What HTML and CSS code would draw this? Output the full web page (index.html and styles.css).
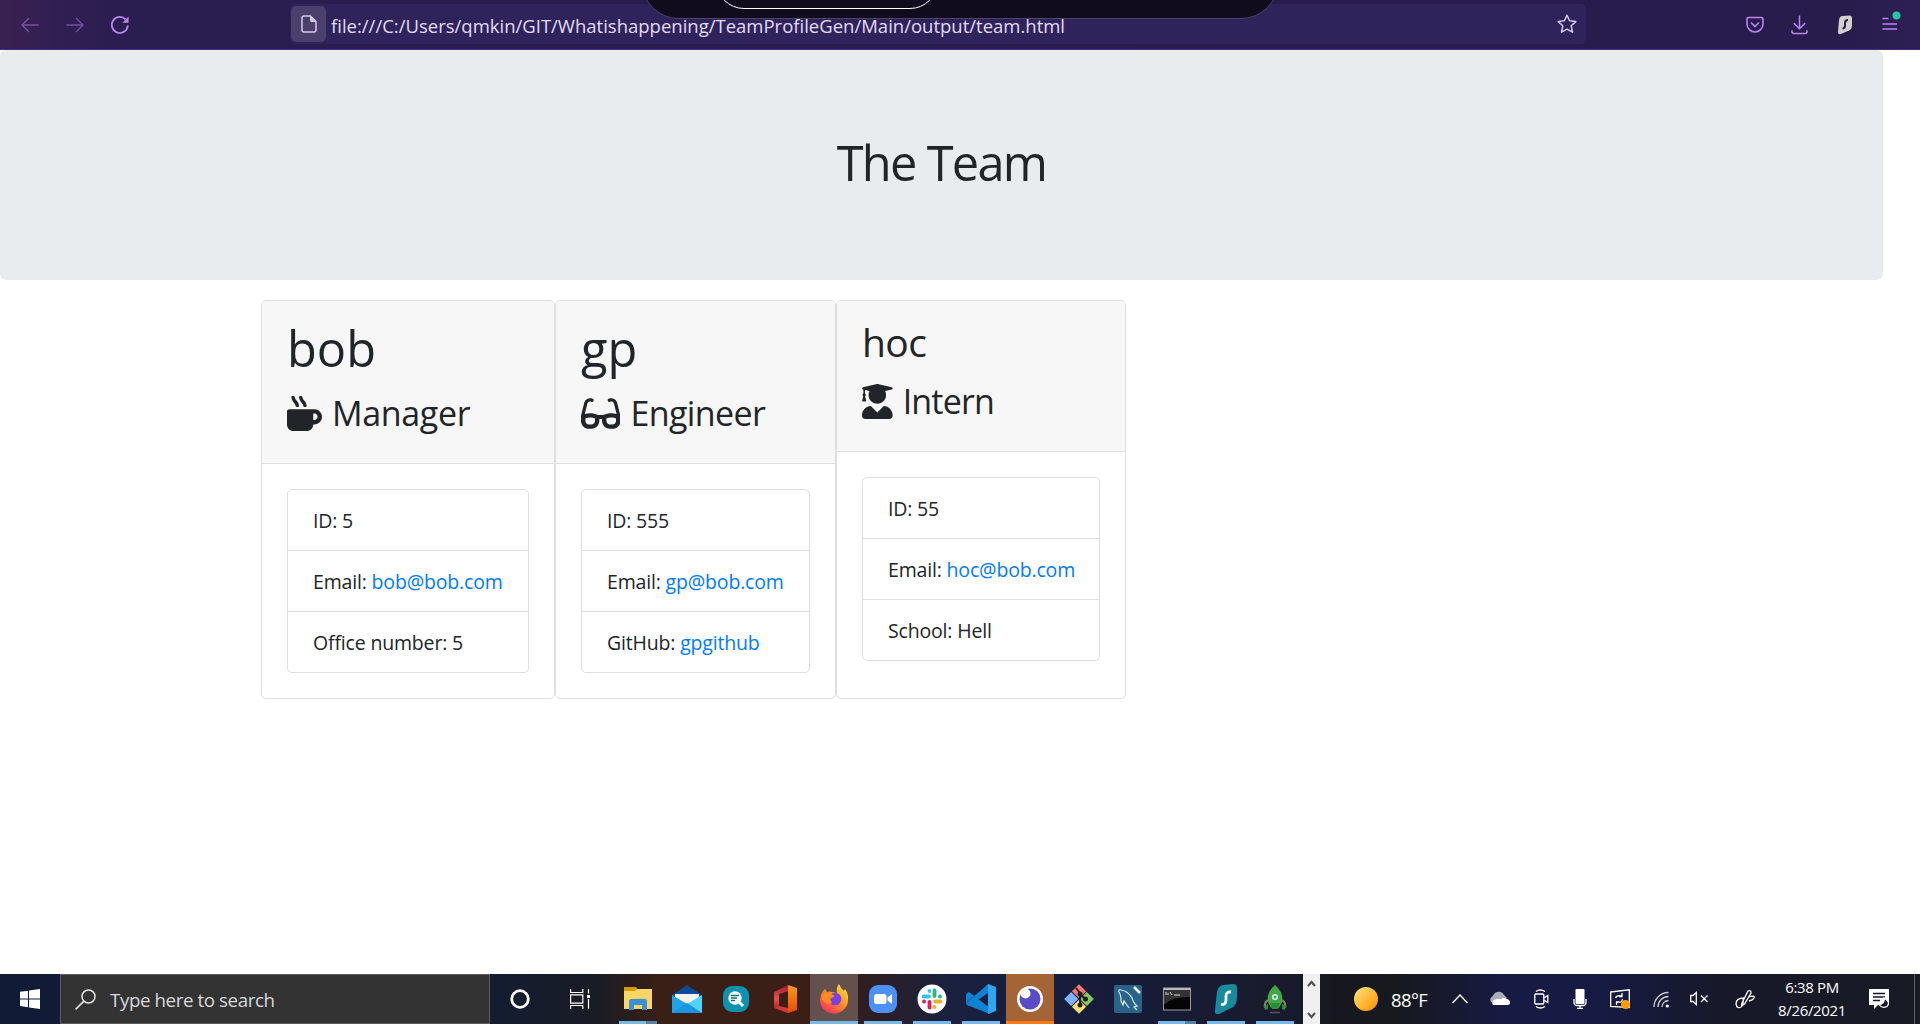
FILE: index.html
```html
<!DOCTYPE html>
<html lang="en">
<head>
<meta charset="utf-8">
<title>The Team</title>
<link rel="stylesheet" href="styles.css">
</head>
<body>
<header class="toolbar">
  <nav class="nav-buttons">
    <svg class="nav-icon dim" viewBox="0 0 18 18"><path d="M17.5 9H1M8 2L1 9l7 7"/></svg>
    <svg class="nav-icon dim" viewBox="0 0 18 18"><path d="M.5 9H17M10 2l7 7-7 7"/></svg>
    <svg class="nav-icon" viewBox="0 0 18 18"><path d="M16.8 9.5A8 8 0 1 1 14.6 3.4" stroke-width="1.8"/><path class="solid" d="M17.6.6v6.2h-6.2z"/></svg>
  </nav>
  <div class="address">
    <span class="page-badge"><svg class="page-icon" viewBox="0 0 16 18"><path d="M3.5 1H9.500l5.500 5.500V15A2 2 0 0 1 13 17H3A2 2 0 0 1 1 15V3A2 2 0 0 1 3 1z"/><path class="solid" d="M9 1l6 6H10.500A1.500 1.500 0 0 1 9 5.500z"/></svg></span>
    <span class="url">file:///C:/Users/qmkin/GIT/Whatishappening/TeamProfileGen/Main/output/team.html</span>
    <svg class="star" viewBox="0 0 20 20"><path d="M10 1.200l2.600 5.600 6.200.8-4.600 4.200 1.300 6.400L10 15.200l-5.500 3 1.300-6.400L1.200 7.600l6.200-.8z"/></svg>
  </div>
  <div class="tools">
    <svg class="tool pocket" viewBox="0 0 18 18"><path d="M2.500 1.500h13A1.500 1.500 0 0 1 17 3v5A8 8 0 0 1 1 8V3A1.500 1.500 0 0 1 2.500 1.500zM5 6.500l4 4 4-4"/></svg>
    <svg class="tool download" viewBox="0 0 18 20"><path d="M9 0v13.500M3 8l6 6 6-6M1 15.500V17A2 2 0 0 0 3 19H15A2 2 0 0 0 17 17V15.500"/></svg>
    <svg class="tool shark" viewBox="0 0 14 20"><path class="body" d="M4 1L12 .5Q14 .5 14 3V10Q14 14 11 15.500L3 19Q0 20 0 17L1 5Q1.500 1.500 4 1z"/><path class="curve" d="M10 5Q7 5 7 8V10.500Q7 13.500 4.500 13.500"/></svg>
    <svg class="tool menu" viewBox="0 0 20 20"><path d="M1.500 7.500H7.500M1.500 13H16M1.500 18H16"/><circle cx="15.500" cy="4.500" r="4"/></svg>
  </div>
  <div class="drop-panel"><div class="drop-pill"></div></div>
</header>

<main class="page">
  <section class="jumbotron"><h1 class="hero">The Team</h1></section>
  <div class="team">
    <article class="card manager">
      <div class="card-header">
        <h1 class="name">bob</h1>
        <h3 class="role"><svg class="role-icon" viewBox="0 0 512 512"><path d="M127.1 146.5c1.3 7.7 8 13.5 16 13.5h16.5c9.8 0 17.6-8.5 16.3-18-3.8-28.2-16.4-54.2-36.6-74.7-14.4-14.7-23.6-33.3-26.4-53.5C111.8 5.9 105 0 96.8 0H80.4C70.6 0 63 8.5 64.1 18c3.9 31.9 18 61.3 40.6 84.4 12 12.2 19.7 27.5 22.4 44.1zm112 0c1.3 7.7 8 13.5 16 13.5h16.5c9.8 0 17.6-8.5 16.3-18-3.8-28.2-16.4-54.2-36.6-74.7-14.4-14.7-23.6-33.3-26.4-53.5C223.8 5.9 217 0 208.8 0h-16.4c-9.8 0-17.5 8.5-16.3 18 3.9 31.9 18 61.3 40.6 84.4 12 12.2 19.7 27.5 22.4 44.1zM400 192H32c-17.700 0-32 14.300-32 32v192c0 53 43 96 96 96h192c53 0 96-43 96-96h16c61.800 0 112-50.200 112-112s-50.200-112-112-112zm0 160h-16v-96h16c26.500 0 48 21.500 48 48s-21.500 48-48 48z"/></svg><span>Manager</span></h3>
      </div>
      <div class="card-body"><ul class="facts">
        <li>ID: 5</li>
        <li>Email: <a>bob@bob.com</a></li>
        <li>Office number: 5</li>
      </ul></div>
    </article>
    <article class="card engineer">
      <div class="card-header">
        <h1 class="name">gp</h1>
        <h3 class="role"><svg class="role-icon" viewBox="0 0 576 512"><path d="M574.100 280.370L528.750 98.660c-5.910-23.700-21.590-44.050-43-55.810-21.440-11.730-46.970-14.110-70.190-6.330l-15.250 5.080c-8.390 2.790-12.920 11.860-10.120 20.240l5.060 15.180c2.790 8.380 11.850 12.910 20.230 10.120l13.180-4.390c10.870-3.620 23-3.570 33.160 1.730 10.290 5.370 17.570 14.560 20.370 25.820l38.460 153.820c-22.190-6.810-49.790-12.460-81.200-12.460-34.770 0-73.980 7.020-114.850 26.740h-73.180c-40.870-19.740-80.080-26.750-114.860-26.750-31.420 0-59.020 5.650-81.210 12.460l38.460-153.830c2.790-11.250 10.090-20.450 20.380-25.810 10.160-5.300 22.280-5.350 33.150-1.730l13.170 4.390c8.380 2.790 17.440-1.740 20.230-10.120l5.060-15.180c2.800-8.380-1.730-17.450-10.120-20.240l-15.250-5.080c-23.220-7.780-48.750-5.410-70.190 6.330-21.410 11.770-37.090 32.110-43 55.810L1.900 280.370A64.218 64.218 0 0 0 0 295.860v70.250C0 429.010 51.580 480 115.200 480h37.120c60.280 0 110.370-45.940 114.880-105.370l2.930-38.630h35.750l2.930 38.630C313.310 434.060 363.400 480 423.680 480h37.120c63.620 0 115.200-50.990 115.200-113.880v-70.250c0-5.230-.64-10.430-1.900-15.500zm-370.720 89.420c-1.970 25.910-24.400 46.210-51.060 46.210H115.200C86.970 416 64 393.620 64 366.110v-37.540c18.120-6.490 43.420-12.920 72.580-12.920 23.860 0 47.260 4.330 69.930 12.920l-3.130 41.220zM512 366.120c0 27.510-22.970 49.880-51.200 49.880h-37.120c-26.670 0-49.100-20.300-51.060-46.210l-3.130-41.220c22.670-8.590 46.080-12.920 69.950-12.920 29.120 0 54.430 6.440 72.550 12.930v37.540z"/></svg><span>Engineer</span></h3>
      </div>
      <div class="card-body"><ul class="facts">
        <li>ID: 555</li>
        <li>Email: <a>gp@bob.com</a></li>
        <li>GitHub: <a>gpgithub</a></li>
      </ul></div>
    </article>
    <article class="card intern">
      <div class="card-header">
        <h2 class="name">hoc</h2>
        <h3 class="role"><svg class="role-icon" viewBox="0 0 448 512"><path d="M319.400 320.600L224 416l-95.400-95.400C57.100 323.700 0 382.200 0 454.400v9.600c0 26.500 21.500 48 48 48h352c26.500 0 48-21.500 48-48v-9.600c0-72.200-57.100-130.700-128.600-133.800zM13.600 79.800l6.400 1.500v58.400c-7 4.200-12 11.500-12 20.300 0 8.400 4.600 15.400 11.100 19.700L3.500 242c-1.700 6.900 2.100 14 7.600 14h41.800c5.500 0 9.300-7.100 7.600-14l-15.600-62.300C51.400 175.400 56 168.400 56 160c0-8.800-5-16.100-12-20.300V87.100l66 15.900c-8.600 17.200-14 36.400-14 57 0 70.700 57.300 128 128 128s128-57.300 128-128c0-20.600-5.300-39.800-14-57l96.300-23.200c18.200-4.400 18.200-27.100 0-31.500l-190.400-46c-13-3.100-26.700-3.100-39.700 0L13.600 48.200c-18.100 4.400-18.100 27.200 0 31.600z"/></svg><span>Intern</span></h3>
      </div>
      <div class="card-body"><ul class="facts">
        <li>ID: 55</li>
        <li>Email: <a>hoc@bob.com</a></li>
        <li>School: Hell</li>
      </ul></div>
    </article>
  </div>
</main>

<footer class="taskbar">
  <div class="start"><svg width="20" height="20" viewBox="0 0 20 20"><path fill="#fff" d="M0 2.800L8 1.700V9.400H0zM9 1.500L20 0V9.400H9zM0 10.400H8V18.200L0 17.100zM9 10.400H20V20L9 18.400z"/></svg></div>
  <div class="search"><svg width="21" height="21" viewBox="0 0 21 21" fill="none" stroke="#e8e8e8" stroke-width="1.500"><circle cx="13.500" cy="7.500" r="6.500"/><path d="M8.900 12.100L.6 20.400"/></svg><span class="hint">Type here to search</span></div>
  <div class="system">
    <svg width="20" height="20" viewBox="0 0 20 20"><circle cx="10" cy="10" r="8.300" fill="none" stroke="#fff" stroke-width="2.800"/></svg>
    <svg width="20" height="20" viewBox="0 0 20 20" fill="none" stroke="#fff" stroke-width="1.200"><path d="M.6 0V3.500H12.800V0M.6 20V16.500H12.800V20M.6 5.800H12.800V14.200H.6zM18.500 0V4.500M18.500 10V20"/><path d="M17 6h3v3h-3z" fill="#fff" stroke="none"/></svg>
  </div>
  <div class="apps">
    <div class="app run split"><svg width="30" height="30" viewBox="0 0 30 30"><path fill="#d99a06" d="M1 3H13L15 6H28V12H1z"/><path fill="#ffd564" d="M1 7H12L14 5H29V25H1z"/><path fill="#3a8fd8" d="M6 26V17Q6 15 8 15H22Q24 15 24 17V26H19V21H11V26z"/></svg></div>
    <div class="app"><svg width="30" height="30" viewBox="0 0 30 30"><path fill="#0a4c98" d="M0 11L15 1 30 11V14H0z"/><path fill="#f2f2f2" d="M3 10H27V15L15 21 3 15z"/><path fill="#1fa4ec" d="M0 11L30 29H0z"/><path fill="#4fd3fa" d="M30 11V29L15 20z"/><path fill="#1b95e0" d="M0 29L15 19 30 29z"/></svg></div>
    <div class="app"><svg width="30" height="30" viewBox="0 0 30 30"><rect x="2" y="2" width="26" height="26" rx="9" fill="#0a92ae"/><circle cx="14" cy="14" r="6.700" fill="#fff"/><path d="M18.500 18.500L22 22" stroke="#fff" stroke-width="3"/><path d="M10 11.500H18M10 14H16M10 16.500H14" stroke="#0a6f86" stroke-width="1.400"/></svg></div>
    <div class="app"><svg width="30" height="30" viewBox="0 0 30 30"><defs><linearGradient id="off" x2="0" y2="1"><stop stop-color="#a8152e"/><stop offset=".6" stop-color="#e8544e"/><stop offset="1" stop-color="#c02020"/></linearGradient><linearGradient id="off2" x2="0" y2="1"><stop stop-color="#ff9a1a"/><stop offset="1" stop-color="#e64a00"/></linearGradient></defs><path fill="url(#off)" d="M4 8L18 1V7L9 10V23L4 24z"/><path fill="#d83838" d="M4 24L9 22 18 24V29z"/><path fill="url(#off2)" d="M18 1L27 4V26L18 29z"/></svg></div>
    <div class="app run wide active"><svg width="30" height="30" viewBox="0 0 30 30"><defs><linearGradient id="fx" x1="1" y1="0" x2=".2" y2="1"><stop stop-color="#fff44f"/><stop offset=".45" stop-color="#ff9a1f"/><stop offset="1" stop-color="#ff2b60"/></linearGradient></defs><path fill="url(#fx)" d="M4 7L6 5 8 8Q11 7 13 8L18 9Q17 3 20 0Q22 5 25 7L26 5Q30 11 29 16A14 13.500 0 0 1 1 16Q1 11 4 7z"/><circle cx="16" cy="15" r="6.300" fill="#7a3fe0"/><path fill="#ff8c1f" d="M3 11Q7 8 12 10L16 12 11 15 13 19 8 20 3 16z"/></svg></div>
    <div class="app run"><svg width="30" height="30" viewBox="0 0 30 30"><rect x="1" y="1" width="28" height="28" rx="9" fill="#4d8ffb"/><rect x="6" y="10" width="12.500" height="10" rx="2.500" fill="#fff"/><path fill="#fff" d="M19.500 13.500L24 10V20L19.500 16.500z"/></svg></div>
    <div class="app run"><svg width="30" height="30" viewBox="0 0 30 30" fill="none" stroke-width="3.800" stroke-linecap="round"><circle cx="15" cy="15" r="14.500" fill="#fff"/><path stroke="#36c5f0" d="M12.500 7V7.100M6.500 12.500H12"/><path stroke="#2eb67d" d="M17.500 6.500V12M23 12.500H22.900"/><path stroke="#ecb22e" d="M18 17.500H23.500M17.500 23V22.900"/><path stroke="#e01e5a" d="M12.500 18V23.500M7 17.500H7.100"/></svg></div>
    <div class="app run"><svg width="30" height="30" viewBox="0 0 30 30"><path fill="#1181d2" d="M0 10L3 8 24 24V30L1 21 0 19z"/><path fill="#0c6cb8" d="M0 19L3 22 24 6V0L1 17z"/><path fill="#1181d2" d="M0 20L22 0V9L3 22z"/><path fill="#2ea5f2" d="M22 0L30 3V27L22 30z"/></svg></div>
    <div class="app run wide alert"><svg width="30" height="30" viewBox="0 0 30 30"><circle cx="15" cy="15" r="13" fill="#fff"/><circle cx="15" cy="15" r="10.500" fill="#5b4bc4"/><circle cx="10.500" cy="9.500" r="5" fill="#fff"/></svg></div>
    <div class="app"><svg width="30" height="30" viewBox="0 0 30 30"><g transform="rotate(45 15 15)"><rect x="4.500" y="4.500" width="10" height="10" fill="#f87777"/><rect x="15.500" y="4.500" width="10" height="10" fill="#82cb60"/><rect x="4.500" y="15.500" width="10" height="10" fill="#80b0ff"/><rect x="15.500" y="15.500" width="10" height="10" fill="#ffe26e"/></g><path d="M12 4L16 9V23M16 10L21 15" stroke="#251f24" stroke-width="2" fill="none"/><circle cx="16" cy="10" r="2.500" fill="#251f24"/><circle cx="16" cy="21" r="2.500" fill="#251f24"/><circle cx="21.500" cy="15" r="2.500" fill="#251f24"/></svg></div>
    <div class="app"><svg width="30" height="30" viewBox="0 0 30 30"><rect x="1" y="1" width="28" height="28" rx="2" fill="#286489"/><path d="M24 26L21 23 24 22Q21 20 19 14Q15 7 8 6Q5 5 6 8Q8 11 8 17L10 21 11 17 16 24" stroke="#d8e8f2" stroke-width="1.200" fill="none"/><path d="M21 3L27 9" stroke="#fff" stroke-width="2.500"/></svg></div>
    <div class="app run split"><svg width="30" height="30" viewBox="0 0 30 30"><rect x="1.500" y="4" width="27" height="22" fill="#050505" stroke="#999"/><path fill="#b9b9b9" d="M2 4H28V6H2z"/><path fill="#333" d="M2 6H28V13Q10 13 3 20H2z"/><path d="M4 8V11M6 9V11M8 8L10 11M12 11H18" stroke="#ddd" stroke-width="1"/></svg></div>
    <div class="app run"><svg width="30" height="30" viewBox="0 0 30 30"><path fill="#178a9e" d="M12 1L22 0Q26 0 26 4V13Q26 22 20 24L8 30Q3 31 4 26L6 8Q7 2 12 1z"/><path d="M20 8Q15 7.500 15 12V16Q15 21 10 20.500" fill="none" stroke="#fff" stroke-width="2.800"/></svg></div>
    <div class="app run"><svg width="30" height="30" viewBox="0 0 30 30"><path d="M9 16Q4 17 5 24M21 16Q26 17 25 24" fill="none" stroke="#8b8062" stroke-width="2.200"/><path fill="#42a846" d="M15 1Q24 9 22 18L19 24H11L8 18Q6 9 15 1z"/><path fill="#2a8c35" d="M10 19H20L18 25H12zM4 22L8 20V25L5 26zM26 22L22 20V25L25 26z"/><circle cx="15" cy="13" r="3" fill="#dff2e6"/><circle cx="15" cy="13" r="1.500" fill="#3b988b"/><path d="M10 28.500H20" stroke="#555" stroke-width="1.500"/></svg></div>
  </div>
  <div class="scroller"><svg viewBox="0 0 17 50"><path d="M5 12L8.500 8L12 12M5 39L8.500 43L12 39" fill="none" stroke="#555" stroke-width="2.200"/></svg></div>
  <div class="tray">
    <span class="sun"></span><span class="temp">88°F</span>
    <svg class="t-chev" viewBox="0 0 16 20"><path d="M.5 14L8 6l7.500 8"/></svg>
    <svg class="t-cloud" viewBox="0 0 20 20"><path fill="#aaadb9" stroke="none" d="M1 13A4 4 0 0 1 3 7A6 6 0 0 1 14 6L17 9 4 14z"/><path fill="#fff" stroke="none" d="M3 16A3.500 3.500 0 0 1 5 10.500Q9 9 11 10.500Q13 7.500 17 10Q20 11 20 13.500T17.500 16z"/></svg>
    <svg class="t-cam" viewBox="0 0 15 20"><rect x=".8" y="5" width="9" height="10" rx="1"/><path d="M9.800 9L13.800 6.500V13.500L9.800 11M2 2.500Q6 -.5 11 2.500M2 17.500Q6 20.500 11 17.500"/></svg>
    <svg class="t-mic" viewBox="0 0 14 20"><rect x="2.500" y="0" width="9" height="15" rx="1" fill="#fff" stroke="none"/><path d="M1 10V13Q1 16.500 4 16.500H10Q13 16.500 13 13V10M7 16.500V19.400M4 19.400H10"/></svg>
    <svg class="t-update" viewBox="0 0 20 20"><path d="M.7 3L19.300 .8V18.500L.7 17.500zM5.500 9Q7 5.500 12 7M12 4V7.500H9M12.500 10Q12 14.500 7 13M6.500 16V13H9.500"/><circle cx="15.500" cy="15.500" r="4.500" fill="#ff9b05" stroke="none"/></svg>
    <svg class="t-wifi" viewBox="0 0 17 20"><path d="M1 18A14.500 14.500 0 0 1 15.500 3.500M5 18A10.500 10.500 0 0 1 15.500 7.500M9 18A6.500 6.500 0 0 1 15.500 11.500" stroke="#c9cad3"/><circle cx="14.300" cy="17" r="1.600" fill="#fff" stroke="none"/></svg>
    <svg class="t-sound" viewBox="0 0 19 20"><path d="M.7 6.500H3L6.300 3.500V15.500L3 12.500H.7zM11 6.500L17.500 13M17.500 6.500L11 13"/></svg>
    <svg class="t-pen" viewBox="0 0 20 20"><path d="M7 14L13 2Q16 .5 16 4L9.500 15 6.500 17zM9 9Q1 9 1 15Q2 20 6 18Q9 16 8 9M14 8Q20 6 19 9Q18 11 14 12"/></svg>
    <time class="clock"><span>6:38 PM</span><span>8/26/2021</span></time>
    <svg class="t-note" viewBox="0 0 21 20"><path fill="#fff" stroke="none" d="M0 0H20V16H9L5 20V16H0z"/><path d="M4 4.500H16M4 8H16M4 11.500H11" stroke="#15172a"/><path d="M15 9Q16 15 10 15.500Q13 20 18 17.500Q22 13 15 9z" fill="#15172a"/></svg>
    <span class="desktop-edge"></span>
  </div>
</footer>
</body>
</html>
```
FILE: styles.css
```css
* { box-sizing: border-box; }
body {
  margin: 0;
  height: 1024px;
  display: flex;
  flex-direction: column;
  overflow: hidden;
  background: #fff;
  color: #212529;
  font: 19.5px/30px "Open Sans", "Noto Sans", sans-serif;
}
h1, h2, h3, ul { margin: 0; padding: 0; font-weight: 400; }
svg { display: block; flex: none; }

.toolbar {
  position: relative;
  height: 50px;
  flex: none;
  display: flex;
  align-items: center;
  background: linear-gradient(90deg, #3a2150 0, #2f1e52 70px, #2a1d50 140px, #281c4d 1850px, #2d1f54 100%);
  border-bottom: 1px solid #41307a;
}
.nav-buttons { width: 290px; padding-left: 21px; display: flex; gap: 27px; }
.nav-icon { width: 18px; height: 18px; fill: none; stroke: #b983f2; stroke-width: 1.3; }
.nav-icon.dim { opacity: .5; }
.nav-icon .solid { fill: #b983f2; stroke: none; }
.address {
  width: 1296px;
  height: 40px;
  margin-top: -1px;
  padding: 0 9px 0 1px;
  display: flex;
  align-items: center;
  border-radius: 5px;
  background: #2e245b;
}
.page-badge { width: 35px; height: 36px; display: grid; place-items: center; border-radius: 5px; background: #49406c; }
.page-icon { width: 16px; height: 18px; fill: none; stroke: #d5c8ee; stroke-width: 1.5; }
.page-icon .solid { fill: #d5c8ee; stroke: none; }
.url { flex: 1; margin-left: 5px; padding-top: 3px; color: #e3dbf7; white-space: nowrap; font-size: 18.5px; }
.star { width: 20px; height: 20px; fill: none; stroke: #d5c8ee; stroke-width: 1.5; stroke-linejoin: round; }
.tools { flex: 1; padding-left: 160px; display: flex; align-items: center; }
.tool { fill: none; stroke: #b983f2; stroke-width: 1.6; }
.pocket { width: 18px; height: 18px; margin-right: 27px; }
.download { width: 17px; height: 20px; margin-right: 30px; }
.shark { width: 14px; height: 20px; margin-right: 29px; }
.shark .body { fill: #d2d0cc; stroke: none; }
.shark .curve { stroke: #29204a; stroke-width: 2; }
.menu { width: 20px; height: 20px; margin-top: -8px; }
.menu circle { fill: #2ac3a2; stroke: none; }
.drop-panel {
  position: absolute;
  left: 641px;
  top: -62px;
  width: 638px;
  height: 81px;
  border: 1px solid #4b4368;
  border-radius: 38px;
  background: #100c1d;
}
.drop-pill {
  width: 222px;
  height: 62px;
  margin: 8px 0 0 74px;
  border: 1.5px solid #fff;
  border-radius: 28px;
}

.page { flex: 1; }
.jumbotron {
  width: 1883px;
  height: 230px;
  padding: 80px 40px;
  border-radius: 6px;
  background: #e9ecef;
  text-align: center;
}
.hero { font-size: 48.75px; line-height: 64px; letter-spacing: -1.7px; }
.team { display: flex; margin: 20px 0 0 261px; }
.card { height: 399px; border: 1px solid #dfdfdf; border-radius: 5px; overflow: hidden; }
.manager { width: 294px; }
.engineer { width: 281px; }
.intern { width: 290px; }
.card-header { padding: 15px 25px; border-bottom: 1px solid #dfdfdf; background: #f7f7f7; }
.name { margin-bottom: 6px; font-size: 48.75px; line-height: 64px; }
h2.name { font-size: 39px; line-height: 52px; letter-spacing: -.6px; }
.role { height: 62px; display: flex; gap: 9px; padding-top: 10px; font-size: 34px; line-height: 35px; letter-spacing: -.6px; }
.manager .role { gap: 10px; letter-spacing: -.35px; }
.engineer .role { gap: 10px; }
.intern .role { gap: 10px; letter-spacing: -.8px; }
.role-icon { height: 35px; fill: currentColor; }
.card-body { padding: 25px; }
.facts { list-style: none; border: 1px solid #dfdfdf; border-radius: 5px; letter-spacing: -.17px; }
.facts li { height: 60px; padding: 16px 25px 0; white-space: nowrap; }
.facts li + li { height: 61px; border-top: 1px solid #dfdfdf; }
.facts a { color: #007bff; }

.taskbar {
  height: 50px;
  flex: none;
  display: flex;
  color: #fff;
  background: linear-gradient(90deg, #111b35 0, #131c32 490px, #1a1c24 600px, #3a1f16 660px, #3a1f17 810px, #2e1e22 870px, #1a2140 950px, #161c3a 1080px, #191a2c 1290px, #17181f 1335px, #17191f 1400px, #171a42 1500px, #171a42 1600px, #17192a 1720px, #181a24 100%);
}
.start { width: 60px; display: grid; place-items: center; }
.search { width: 430px; display: flex; align-items: center; padding-left: 14px; gap: 14px; border: 1px solid #5c5c5c; background: #333; color: #d8d8d8; }
.hint { padding-top: 2px; font-size: 18.75px; letter-spacing: -.42px; }
.system { width: 124px; display: flex; align-items: center; padding-left: 20px; gap: 40px; }
.apps { width: 689px; display: flex; gap: 1px; }
.app { width: 48px; position: relative; display: grid; place-items: center; flex: none; }
.run::after { content: ""; position: absolute; left: 5px; right: 5px; bottom: 0; height: 3px; background: #76b9ed; }
.wide::after { left: 0; right: 0; }
.split::after { background: linear-gradient(90deg, #76b9ed 27px, #5382a8 27px); }
.active { background: #64504c; }
.alert { background: #a56435; }
.alert::after { background: #ff7b0f; }
.scroller { width: 17px; background: #f0f0f0; }
.tray { flex: 1; display: flex; align-items: center; }
.tray svg { height: 20px; fill: none; stroke: #fff; stroke-width: 1.3; }
.sun { width: 24px; height: 24px; margin-left: 34px; border-radius: 50%; background: linear-gradient(135deg, #ffe481, #ffb32c 60%, #f98c00); }
.temp { width: 61px; margin-left: 13px; padding-top: 2px; font-size: 18.5px; letter-spacing: -.6px; white-space: nowrap; }
.t-chev { width: 16px; margin-right: 22px; }
.t-cloud { width: 20px; margin-right: 24px; }
.t-cam { width: 15px; margin-right: 24px; }
.t-mic { width: 14px; margin-right: 23px; }
.t-update { width: 20px; margin-right: 23px; }
.t-wifi { width: 17px; margin-right: 20px; }
.t-sound { width: 19px; margin-right: 26px; }
.t-pen { width: 20px; margin-right: 13px; }
.clock { width: 88px; display: flex; flex-direction: column; align-items: center; font-size: 15px; line-height: 23px; letter-spacing: -.35px; white-space: nowrap; }
.t-note { width: 21px; margin-left: 13px; }
.desktop-edge { width: 6px; height: 50px; margin-left: auto; border-left: 1px solid #5a5d6a; }
```
